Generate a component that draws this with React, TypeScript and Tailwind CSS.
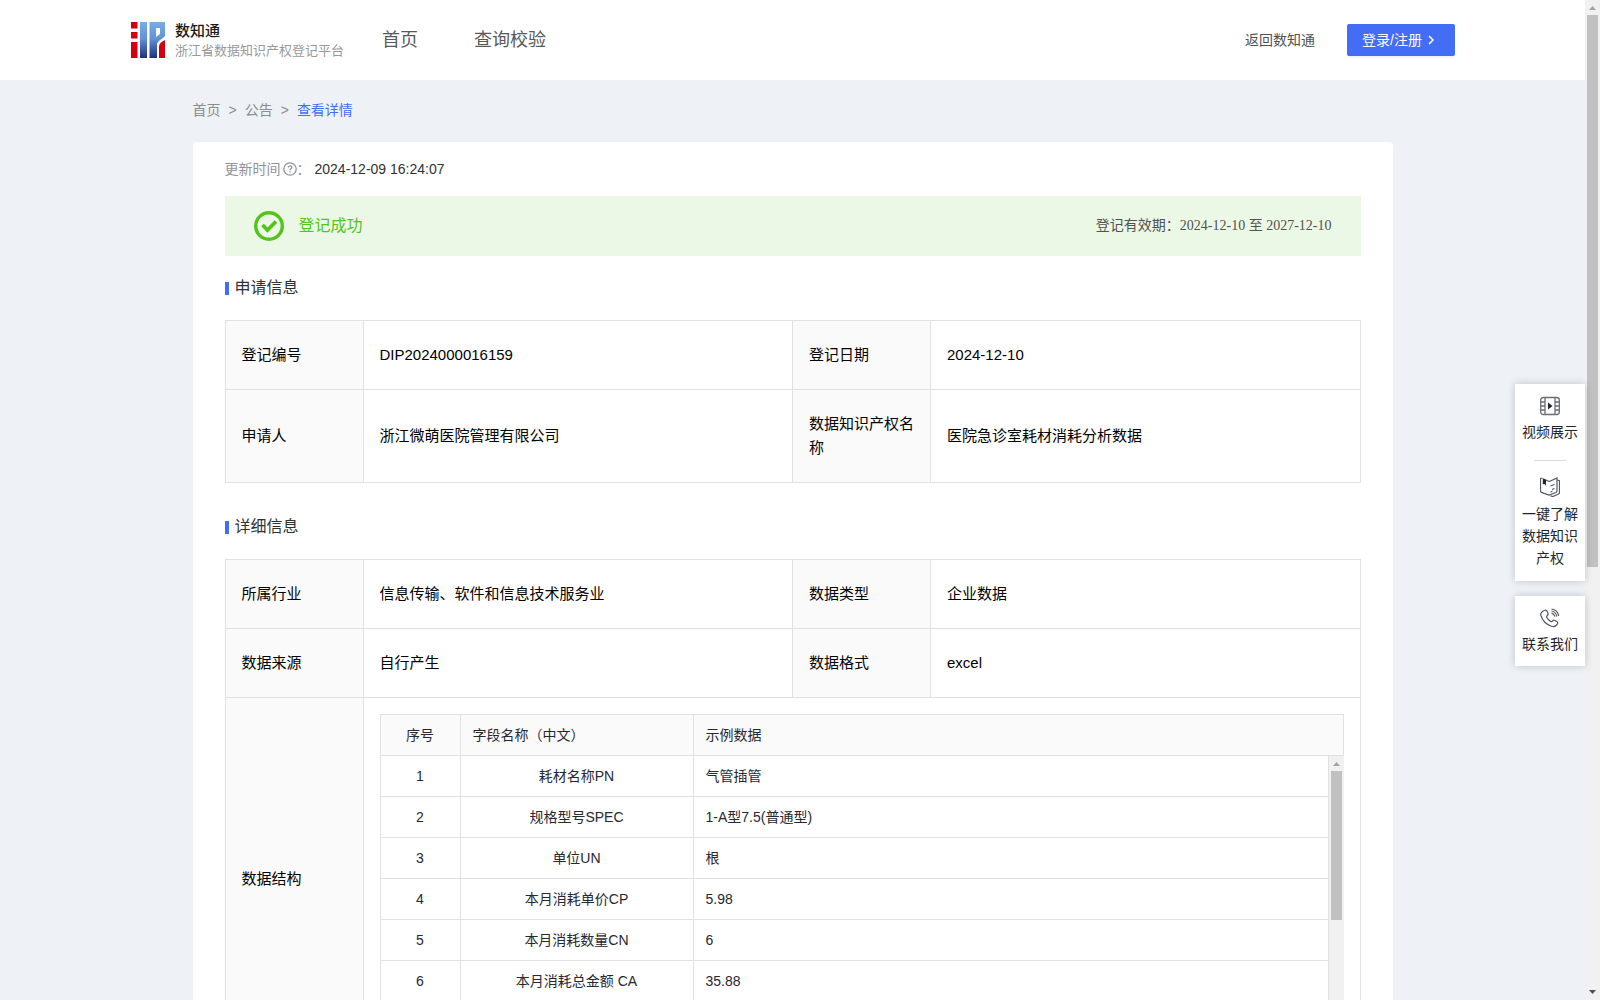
const borderColor = 'border-[#e1e1e1]';

type InfoRow = [string, string, string, string];

const applyRows: InfoRow[] = [
  ['登记编号', 'DIP2024000016159', '登记日期', '2024-12-10'],
  ['申请人', '浙江微萌医院管理有限公司', '数据知识产权名称', '医院急诊室耗材消耗分析数据'],
];

const detailRows: InfoRow[] = [
  ['所属行业', '信息传输、软件和信息技术服务业', '数据类型', '企业数据'],
  ['数据来源', '自行产生', '数据格式', 'excel'],
];

const fields = [
  { name: '耗材名称PN', sample: '气管插管' },
  { name: '规格型号SPEC', sample: '1-A型7.5(普通型)' },
  { name: '单位UN', sample: '根' },
  { name: '本月消耗单价CP', sample: '5.98' },
  { name: '本月消耗数量CN', sample: '6' },
  { name: '本月消耗总金额 CA', sample: '35.88' },
];

function Logo() {
  return (
    <svg viewBox="0 0 34 36" className="w-[34px] h-9" aria-hidden="true">
      <defs>
        <linearGradient id="logoBlue" gradientUnits="userSpaceOnUse" x1="0" y1="0" x2="0" y2="36">
          <stop offset="0" stopColor="#78ade6" />
          <stop offset="0.45" stopColor="#6294d6" />
          <stop offset="1" stopColor="#1f2f80" />
        </linearGradient>
      </defs>
      <path fill="#d3000f" d="M0 0h6.500v6.500H0zM0 10h6.500v6.500H0zM0 20h6.500v16H0z" />
      <path fill="url(#logoBlue)" d="M9 0h7v36H9z" />
      <path fill="url(#logoBlue)" fillRule="evenodd" d="M18.500 0H34v14c-2 2.500-5.500 3.500-8 7.500V36h-7.500zM25 6v9l4-3V6z" />
      <path fill="#d3000f" d="M28 36V24c.5-3 3-4.500 6-6v18z" />
    </svg>
  );
}

function VideoIcon() {
  return (
    <svg viewBox="0 0 20 20" className="size-5" fill="none" stroke="#6b6e76" strokeWidth="1.3" aria-hidden="true">
      <rect x="0.700" y="1.500" width="18.600" height="17" rx="2.500" />
      <path d="M5 1.500v17M15 1.500v17M1 6h4M1 10h4M1 14h4M15 6h4M15 10h4M15 14h4" />
      <path d="M8 6.500l4.500 3.500-4.500 3.500z" fill="#22252e" stroke="none" />
    </svg>
  );
}

function BookIcon() {
  return (
    <svg viewBox="0 0 20 20" className="size-5" fill="none" stroke="#55585f" strokeWidth="1.200" aria-hidden="true">
      <path d="M2.500 1l-2 .5v12.500c0 1 .5 1.500 1.500 1.700L9 18l7-2.500c.7-.3 1-.8 1-1.500V1l-6.500 3c-1 .5-1.500.5-2.500 0L6 3" />
      <path d="M17 3l2.500.8v11.700c0 .7-.3 1.200-1 1.500L13 19.500l-2.500-.7" />
      <path d="M2.800 1.200l3.200 1.300v6l-1.600-1.500-1.600.3z" fill="#22252e" stroke="none" />
      <path d="M10.500 9l4-1.500M12 12.500l2.500-1M10.500 15l2-.8" />
    </svg>
  );
}

function PhoneIcon() {
  return (
    <svg viewBox="0 0 20 20" className="size-5" fill="none" stroke="#55585f" strokeWidth="1.200" aria-hidden="true">
      <path d="M4.500 2.500c1.200-.6 2.200-.2 2.700.9l.8 2c.4 1-.1 1.800-.9 2.300-.7.500-.6 1.100-.2 1.900 1 1.800 2.200 3 3.800 3.900.8.400 1.300.3 1.700-.3.600-.9 1.500-1.200 2.500-.7l1.900 1.100c1 .6 1.200 1.600.5 2.600-1.300 2-3.500 2.900-5.900 2-5.300-1.900-9-5.700-10.500-10.700-.6-2.200.9-4 3.600-5z" />
      <path d="M11.500 5.200c1.600.4 2.800 1.600 3.300 3.500M11.500 3c2.700.5 4.700 2.500 5.300 5.500M11.500 1c3.800.5 6.500 3.200 7.200 7" />
    </svg>
  );
}

function Nav() {
  return (
    <header className="bg-white">
      <div className="max-w-[1325px] h-20 mx-auto flex items-center">
        <div className="flex items-center gap-[10px] pl-px">
          <Logo />
          <div className="w-[167px] pt-[3px] whitespace-nowrap">
            <div className="text-[15px] leading-[18px] font-medium text-[#1a1a1a]">数知通</div>
            <div className="text-[13px] leading-[21px] text-[#999999]">浙江省数据知识产权登记平台</div>
          </div>
        </div>
        <nav className="flex-1 flex gap-14 ml-10 text-lg text-[#595959]">
          <a href="#home">首页</a>
          <a href="#verify">查询校验</a>
        </nav>
        <a href="#portal" className="mr-8 text-sm text-[#515151]">返回数知通</a>
        <button
          type="button"
          className="h-8 w-[108px] pl-[15px] flex items-center gap-[3px] rounded-xs bg-[#446df6] text-white text-sm shadow-[0_2px_0_rgba(0,0,0,0.045)]"
        >
          登录/注册
          <svg viewBox="0 0 12 12" className="size-3" fill="none" stroke="currentColor" strokeWidth="1.500" aria-hidden="true">
            <path d="M4 2l4 4-4 4" />
          </svg>
        </button>
      </div>
    </header>
  );
}

function SectionTitle({ children }: { children: string }) {
  return (
    <h2 className="flex items-center gap-[6px] text-base leading-6 text-[#303133]">
      <span className="w-1 h-[13px] bg-[#446df6]" />
      {children}
    </h2>
  );
}

function InfoCols() {
  return (
    <colgroup>
      <col className="w-[138px]" />
      <col />
      <col className="w-[138px]" />
      <col />
    </colgroup>
  );
}

function InfoRows({ rows }: { rows: InfoRow[] }) {
  return rows.map(([labelA, valueA, labelB, valueB]) => (
    <tr key={labelA}>
      <th className={`border ${borderColor} bg-[#fafafa] px-4 py-[22px] text-left font-normal`}>{labelA}</th>
      <td className={`border ${borderColor} px-4 py-[22px]`}>{valueA}</td>
      <th className={`border ${borderColor} bg-[#fafafa] px-4 py-[22px] text-left font-normal`}>{labelB}</th>
      <td className={`border ${borderColor} px-4 py-[22px]`}>{valueB}</td>
    </tr>
  ));
}

function FieldCols() {
  return (
    <colgroup>
      <col className="w-20" />
      <col className="w-[233px]" />
      <col />
    </colgroup>
  );
}

function FieldTable() {
  return (
    <div className={`border-l ${borderColor} text-sm text-[#262833]`}>
      <div className={`border-y border-r ${borderColor} bg-[#fafafa]`}>
        <table className="w-full table-fixed border-separate border-spacing-0">
          <FieldCols />
          <thead>
            <tr>
              <th className={`h-10 border-r ${borderColor} text-center font-normal`}>序号</th>
              <th className={`h-10 px-3 border-r ${borderColor} text-left font-normal`}>字段名称（中文）</th>
              <th className="h-10 px-3 text-left font-normal">示例数据</th>
            </tr>
          </thead>
        </table>
      </div>
      <div className="flex h-[288px]">
        <div className={`flex-1 border-r ${borderColor}`}>
          <table className="w-full table-fixed border-separate border-spacing-0">
            <FieldCols />
            <tbody>
              {fields.map((field, i) => (
                <tr key={field.name}>
                  <td className={`h-[41px] border-b border-r ${borderColor} text-center`}>{i + 1}</td>
                  <td className={`h-[41px] border-b border-r ${borderColor} text-center`}>{field.name}</td>
                  <td className={`h-[41px] border-b ${borderColor} px-3`}>{field.sample}</td>
                </tr>
              ))}
            </tbody>
          </table>
        </div>
        <Scrollbar thumb="h-[149px]" />
      </div>
    </div>
  );
}

function Scrollbar({ thumb }: { thumb: string }) {
  return (
    <div className="w-[15px] shrink-0 bg-[#f1f1f1] flex flex-col items-center" aria-hidden="true">
      <svg viewBox="0 0 15 15" className="size-[15px] shrink-0">
        <path d="M4 10l3.500-4 3.500 4z" fill="#a3a3a3" />
      </svg>
      <div className={`w-[11px] bg-[#c1c1c1] ${thumb}`} />
      <svg viewBox="0 0 15 15" className="size-[15px] shrink-0 mt-auto">
        <path d="M4 5l3.500 4 3.500-4z" fill="#505050" />
      </svg>
    </div>
  );
}

function SideTools() {
  return (
    <aside className="absolute right-[15px] top-[384px] w-[70px] flex flex-col gap-[15px] text-sm leading-[22px] text-[#22252e] text-center">
      <div className="bg-white shadow-[0_0_8px_rgba(0,0,0,0.2)] px-[7px] py-3 flex flex-col items-center">
        <a href="#video" className="flex flex-col items-center gap-[5px]">
          <VideoIcon />
          视频展示
        </a>
        <hr className="w-8 mt-[17px] mb-4 border-[#dcdcdc]" />
        <a href="#guide" className="flex flex-col items-center gap-[6px]">
          <BookIcon />
          一键了解数据知识产权
        </a>
      </div>
      <div className="bg-white shadow-[0_0_8px_rgba(0,0,0,0.2)] px-[7px] pt-3 pb-[11px]">
        <a href="#contact" className="flex flex-col items-center gap-[5px]">
          <PhoneIcon />
          联系我们
        </a>
      </div>
    </aside>
  );
}

export default function App() {
  return (
    <div className="relative h-screen flex bg-[#eef2f6] overflow-hidden font-['Liberation_Sans','Noto_Sans_CJK_SC',sans-serif]">
      <div className="flex-1 overflow-y-auto [scrollbar-width:none]">
        <Nav />
        <main className="max-w-[1200px] mx-auto pb-10">
          {/* Breadcrumb */}
          <nav className="flex items-center gap-2 pt-5 pb-[22px] text-sm text-[#8c8c8c]">
            <a href="#home">首页</a>
            <span>&gt;</span>
            <a href="#notice">公告</a>
            <span>&gt;</span>
            <a href="#detail" className="text-[#446df6]">查看详情</a>
          </nav>

          <div className="bg-white rounded-sm px-8 pt-4 pb-8">
            <div className="flex items-center text-sm leading-[22px] text-[#909399]">
              更新时间
              <svg viewBox="0 0 14 14" className="size-[14px] ml-[2px]" fill="none" stroke="currentColor" aria-hidden="true">
                <circle cx="7" cy="7" r="6.200" strokeWidth="1.300" />
                <path d="M5.200 5.600c0-2.400 3.700-2.400 3.700-.1 0 1.300-1.900 1.300-1.900 2.700M7 9.300v1.200" strokeWidth="1.300" />
              </svg>
              ：
              <span className="ml-1 text-[#303133]">2024-12-09 16:24:07</span>
            </div>

            {/* Status banner */}
            <div className="mt-4 h-[60px] px-[29px] flex items-center bg-[#ebf8e6]">
              <svg viewBox="0 0 30 30" className="size-[30px]" fill="none" stroke="#52c41a" aria-hidden="true">
                <circle cx="15" cy="15" r="13.300" strokeWidth="3.400" />
                <path d="M8.500 14l5 5 8.500-8.500" strokeWidth="3.800" />
              </svg>
              <span className="ml-[15px] text-base text-[#52c41a]">登记成功</span>
              <span className="ml-auto text-sm text-[#515151] font-['Liberation_Serif','Noto_Sans_CJK_SC',serif]">
                登记有效期：2024-12-10 至 2027-12-10
              </span>
            </div>

            <div className="mt-5 mb-5">
              <SectionTitle>申请信息</SectionTitle>
            </div>
            <table className="w-full table-fixed border-collapse text-[15px] leading-6 text-black">
              <InfoCols />
              <tbody>
                <InfoRows rows={applyRows} />
              </tbody>
            </table>

            <div className="mt-8 mb-5">
              <SectionTitle>详细信息</SectionTitle>
            </div>
            <table className="w-full table-fixed border-collapse text-[15px] leading-6 text-black">
              <InfoCols />
              <tbody>
                <InfoRows rows={detailRows} />
                <tr>
                  <th className={`border ${borderColor} bg-[#fafafa] px-4 text-left font-normal`}>数据结构</th>
                  <td colSpan={3} className={`border ${borderColor} p-4`}>
                    <FieldTable />
                  </td>
                </tr>
              </tbody>
            </table>
          </div>
        </main>
      </div>
      <Scrollbar thumb="h-[552px]" />
      <SideTools />
    </div>
  );
}
